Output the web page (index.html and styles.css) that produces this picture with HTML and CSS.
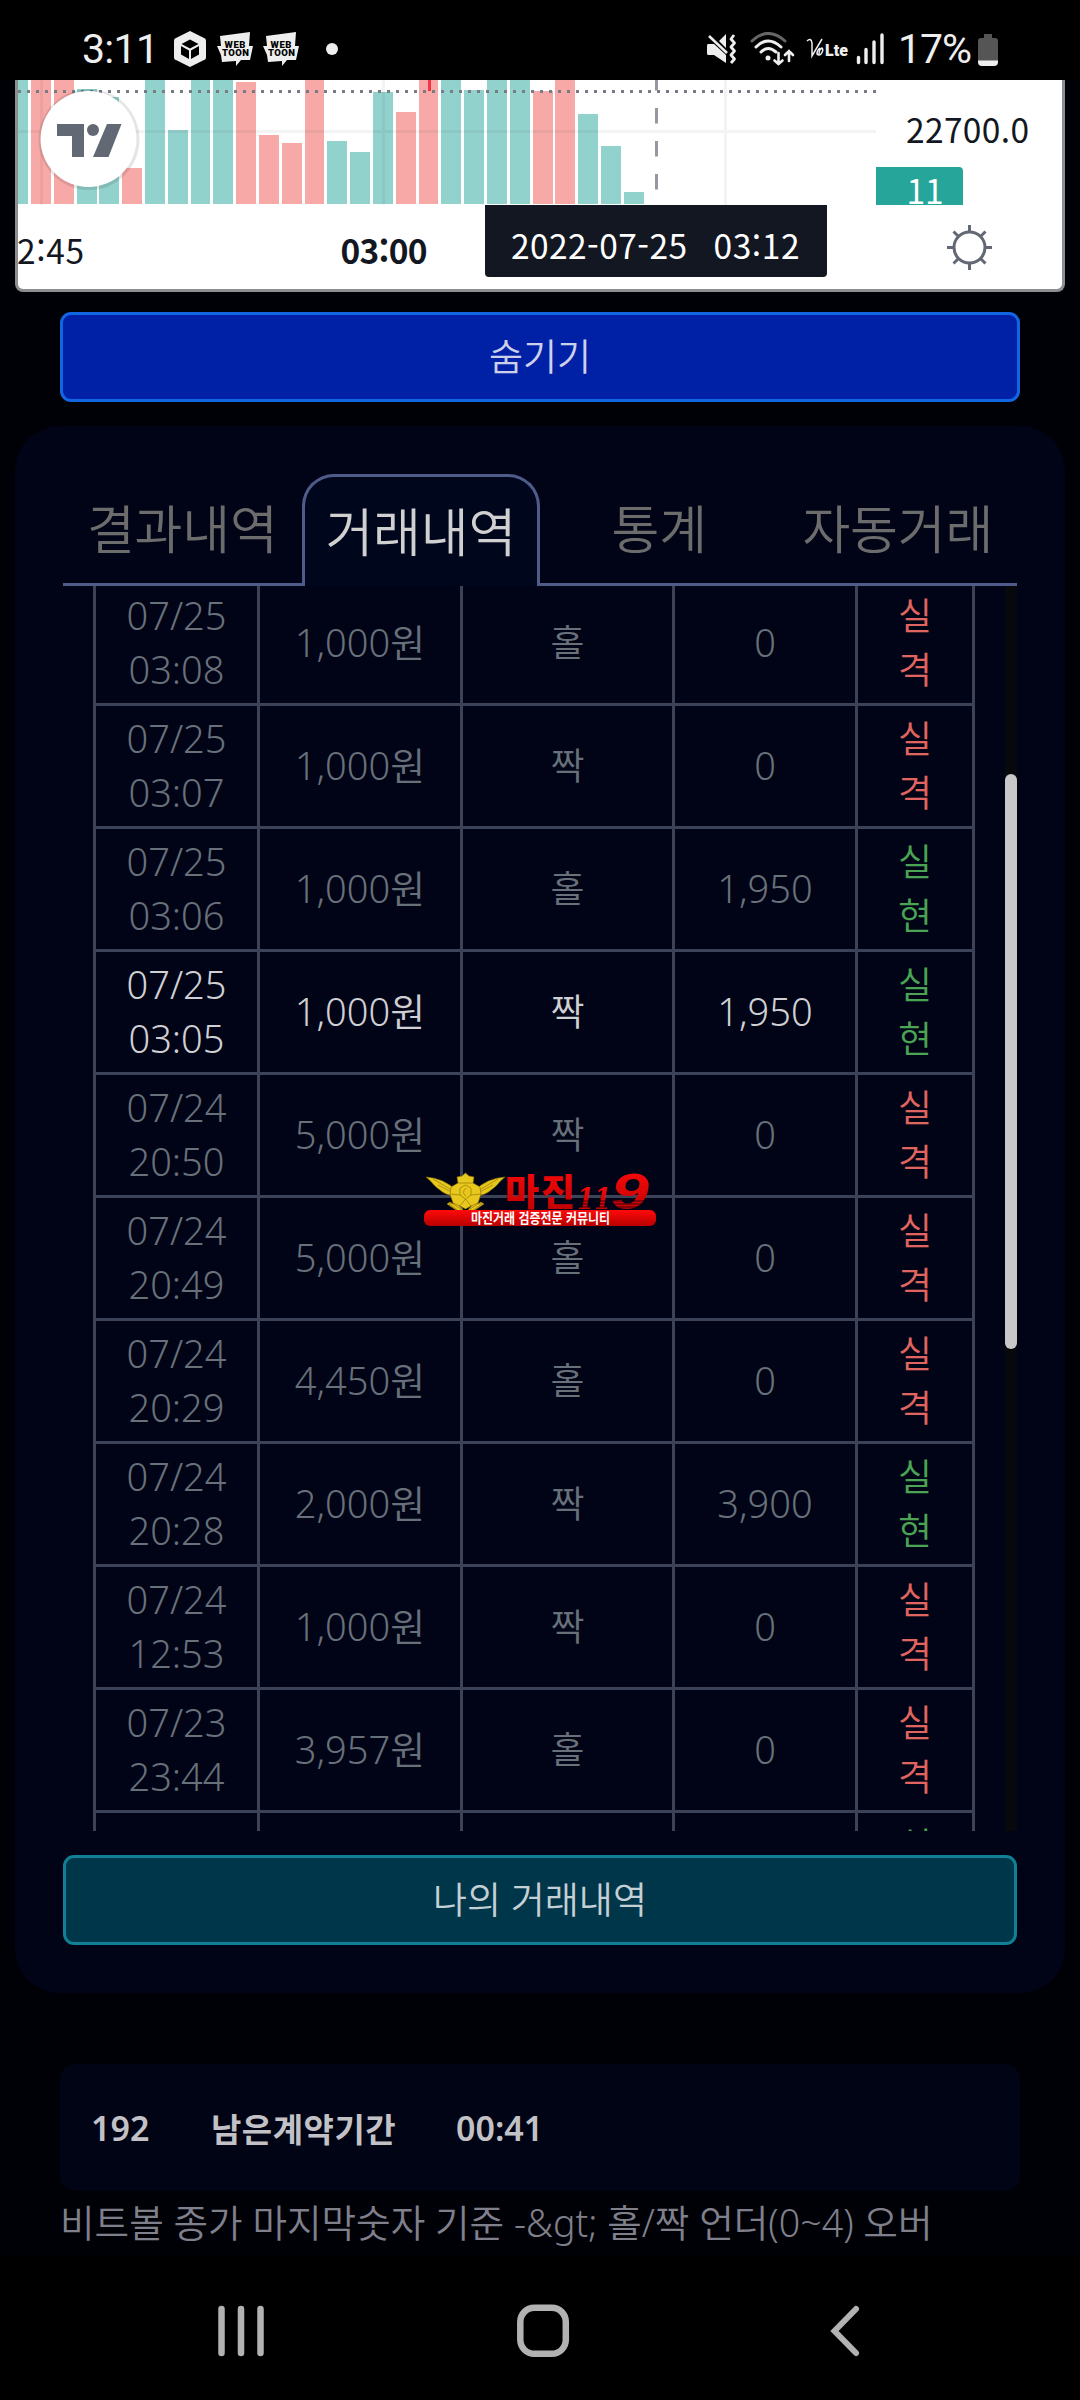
FILE: index.html
```
<!DOCTYPE html>
<html lang="ko">
<head>
<meta charset="UTF-8">
<title>거래내역</title>
<link rel="stylesheet" href="styles.css">
</head>
<body>
<header class="statusbar">
  <div class="status-left">
    <span class="clock">3:11</span>
    <svg class="ico-hex" width="34" height="38" viewBox="0 0 34 38">
      <path d="M17 1 L32 8.500 Q33 9 33 11 V27 Q33 29 32 29.500 L17 37 L2 29.500 Q1 29 1 27 V11 Q1 9 2 8.500 Z" fill="#eee"/>
      <path d="M17 9.500 L25.500 14 L17 18.500 L8.500 14 Z M8 16 L16 20.500 V29 L8 24.500 Z M26 16 L18 20.500 V29 L26 24.500 Z" fill="#000"/>
    </svg>
    <svg class="ico-toon" width="36" height="36" viewBox="0 0 36 36">
      <path d="M3 5 L33 1 L32 15 H36 L33 29 H24 L19 35 V30 L5 31 L4 24 L0 15 H4 Z" fill="#eee"/>
      <text x="18" y="16.500" text-anchor="middle" textLength="21" class="toon-text">WEB</text>
      <text x="18.500" y="25" text-anchor="middle" textLength="27" class="toon-text">TOON</text>
    </svg>
    <svg class="ico-toon" width="36" height="36" viewBox="0 0 36 36">
      <path d="M3 5 L33 1 L32 15 H36 L33 29 H24 L19 35 V30 L5 31 L4 24 L0 15 H4 Z" fill="#eee"/>
      <text x="18" y="16.500" text-anchor="middle" textLength="21" class="toon-text">WEB</text>
      <text x="18.500" y="25" text-anchor="middle" textLength="27" class="toon-text">TOON</text>
    </svg>
    <span class="dot"></span>
  </div>
  <div class="status-right">
    <svg width="32" height="32" viewBox="0 0 32 32">
      <path d="M2 11 H8 L20 22 V30 L8 22 H2 Q1 22 1 20 V13 Q1 11 2 11 Z M20 1 V15 L13 8 Z" fill="#eee"/>
      <path d="M3 3 L21 20" stroke="#eee" stroke-width="2.500" fill="none"/>
      <path d="M28 2 L25 6 L28.500 10 L25 14 L28.500 18 L25 22 L28.500 26 L25 30" stroke="#eee" stroke-width="2.800" fill="none" stroke-linejoin="round"/>
    </svg>
    <svg class="ico-wifi" width="45" height="34" viewBox="0 0 45 34">
      <g fill="none" stroke="#eee" stroke-width="3" stroke-linecap="round">
        <path d="M2 9 Q18 -6 35 9" stroke="#666"/>
        <path d="M6 15 Q18 3 31 15"/>
        <path d="M11 20 Q18 13 26 20"/>
        <path d="M28.500 21 V32 M24.500 28.500 L28.500 32 L32.500 28.500 M39 29 V19 M35 23 L39 19 L43 23" stroke-width="2.600"/>
      </g>
      <circle cx="18" cy="26" r="2.500" fill="#eee"/>
    </svg>
    <svg class="ico-volte" width="43" height="24" viewBox="0 0 43 24">
      <path d="M1 4 Q5 0 6 6 V19 L16 2 M13 17 Q13 12 16 11 Q18 13 15 17 Q13 19 11 17 Q11 13 14 11" fill="none" stroke="#eee" stroke-width="1.500"/>
      <text x="19" y="19" textLength="23" class="lte-text">Lte</text>
    </svg>
    <svg class="ico-signal" width="28" height="32" viewBox="0 0 28 32">
      <path d="M2.500 24.500 V29.500 M10 16.500 V29.500 M18 9 V29.500 M26 2 V29.500" stroke="#eee" stroke-width="3.400" stroke-linecap="round"/>
    </svg>
    <span class="percent">17%</span>
    <svg class="ico-battery" width="20" height="33" viewBox="0 0 20 33">
      <path d="M6 1 H14 V5 H17 Q20 5 20 8 V28 H0 V8 Q0 5 3 5 H6 Z" fill="#555"/>
      <path d="M0 27.500 H20 V29 Q20 33 16 33 H4 Q0 33 0 29 Z" fill="#eee"/>
    </svg>
  </div>
</header>

<main class="page">
  <section class="chart">
    <svg class="chart-svg" width="1044" height="209" viewBox="18 80 1044 209">
      <g fill="#92d2cc">
        <path d="M18 80h10v124h-10z M77 89h20v115h-20z M99 97h20v107h-20z M145 80h20v124h-20z M168 130h20v74h-20z M191 80h19v124h-19z M213 80h20v124h-20z"/>
        <path d="M327 141h20v63h-20z M350 152h20v52h-20z M373 92h20v112h-20z M441 80h20v124h-20z M464 90h20v114h-20z M487 80h20v124h-20z M510 80h20v124h-20z"/>
        <path d="M578 114h20v90h-20z M601 146h20v58h-20z M624 192h20v12h-20z"/>
      </g>
      <g fill="#f7a9a7">
        <path d="M31 80h20v124h-20z M54 80h20v124h-20z M122 168h20v36h-20z M236 82h20v122h-20z M259 135h20v69h-20z M282 143h20v61h-20z M305 80h19v124h-19z"/>
        <path d="M396 112h20v92h-20z M419 80h19v124h-19z M533 91h20v113h-20z M555 80h20v124h-20z"/>
      </g>
      <path d="M429.500 80V91" stroke="#f23645" stroke-width="3"/>
      <path d="M18 131.500H876M41.500 80V205M383.500 80V205M725.500 80V205" stroke="#2a2e39" stroke-opacity=".06" stroke-width="3"/>
      <path d="M18 91.500H876" stroke="#787b86" stroke-width="3" stroke-dasharray="3 6"/>
      <path d="M656.500 75V190" stroke="#9598a1" stroke-width="3" stroke-dasharray="15.500 17.500"/>
      <!-- logo badge -->
      <circle cx="89" cy="139.500" r="50.500" fill="#000" fill-opacity=".1"/>
      <circle cx="88.500" cy="139" r="48" fill="#fff"/>
      <path d="M57 124H84V157H72V136H57Z M107 124H121.500L108.500 157H93Z" fill="#636875"/>
      <circle cx="93" cy="130" r="6" fill="#636875"/>
      <!-- price and time axis -->
      <text x="906" y="143" textLength="123" class="axis">22700.0</text>
      <path d="M876 167H959Q963 167 963 171V205H876Z" fill="#26a69a"/>
      <text x="906.500" y="204" class="axis axis-white">11</text>
      <text x="17" y="264" textLength="67" class="axis">2:45</text>
      <text x="340.500" y="264" textLength="87" class="axis axis-bold">03:00</text>
      <path d="M485 205H827V273Q827 277 823 277H489Q485 277 485 273Z" fill="#131722"/>
      <text x="511" y="259" textLength="176" class="axis axis-white">2022-07-25</text>
      <text x="713.500" y="259" textLength="86" class="axis axis-white">03:12</text>
      <g stroke="#636875" stroke-width="3" fill="none">
        <circle cx="969.500" cy="247.500" r="15.500"/>
        <path d="M969.500 225V232M969.500 263V270M947 247.500H954M985 247.500H992M953.500 231.500L958.500 236.500M980.500 258.500L985.500 263.500M985.500 231.500L980.500 236.500M953.500 263.500L958.500 258.500"/>
      </g>
    </svg>
  </section>

  <button class="btn btn-hide">숨기기</button>

  <section class="panel">
    <nav class="tabs">
      <a class="tab">결과내역</a>
      <a class="tab active">거래내역</a>
      <a class="tab">통계</a>
      <a class="tab">자동거래</a>
    </nav>
    <div class="scroll">
      <table class="history">
        <colgroup><col class="c-date"><col class="c-money"><col class="c-type"><col class="c-profit"><col class="c-result"></colgroup>
        <tr><td class="num">07/25<br>03:08</td><td class="num">1,000원</td><td>홀</td><td class="num">0</td><td class="lose">실<br>격</td></tr>
        <tr><td class="num">07/25<br>03:07</td><td class="num">1,000원</td><td>짝</td><td class="num">0</td><td class="lose">실<br>격</td></tr>
        <tr><td class="num">07/25<br>03:06</td><td class="num">1,000원</td><td>홀</td><td class="num">1,950</td><td class="win">실<br>현</td></tr>
        <tr class="hover"><td class="num">07/25<br>03:05</td><td class="num">1,000원</td><td>짝</td><td class="num">1,950</td><td class="win">실<br>현</td></tr>
        <tr><td class="num">07/24<br>20:50</td><td class="num">5,000원</td><td>짝</td><td class="num">0</td><td class="lose">실<br>격</td></tr>
        <tr><td class="num">07/24<br>20:49</td><td class="num">5,000원</td><td>홀</td><td class="num">0</td><td class="lose">실<br>격</td></tr>
        <tr><td class="num">07/24<br>20:29</td><td class="num">4,450원</td><td>홀</td><td class="num">0</td><td class="lose">실<br>격</td></tr>
        <tr><td class="num">07/24<br>20:28</td><td class="num">2,000원</td><td>짝</td><td class="num">3,900</td><td class="win">실<br>현</td></tr>
        <tr><td class="num">07/24<br>12:53</td><td class="num">1,000원</td><td>짝</td><td class="num">0</td><td class="lose">실<br>격</td></tr>
        <tr><td class="num">07/23<br>23:44</td><td class="num">3,957원</td><td>홀</td><td class="num">0</td><td class="lose">실<br>격</td></tr>
        <tr><td></td><td></td><td></td><td></td><td class="win">실<br>현</td></tr>
      </table>
      <div class="track"><div class="thumb"></div></div>
      <svg class="watermark" width="234" height="56" viewBox="424 1171 234 56">
        <defs>
          <linearGradient id="red" x1="0" y1="0" x2="0" y2="1">
            <stop offset="0" stop-color="#ff0a0a"/>
            <stop offset="1" stop-color="#b80000"/>
          </linearGradient>
        </defs>
        <g fill="#e8c81c" stroke="#8a6d08" stroke-width=".6">
          <path d="M456 1190 Q443 1178 426 1177 Q432 1182 434 1185 Q437 1188 440 1190 Q445 1195 455 1196 Z"/>
          <path d="M475 1190 Q488 1178 505 1177 Q499 1182 497 1185 Q494 1188 491 1190 Q486 1195 476 1196 Z"/>
          <path d="M433 1179 L455 1192 M438 1185 L455 1194 M498 1179 L476 1192 M493 1185 L476 1194" fill="none"/>
          <path d="M449 1204 L457 1203 L463 1210 L459 1211 Z M482 1204 L474 1203 L468 1210 L472 1211 Z M447 1204 L450 1202 L461 1209 L459 1212 Z M484 1204 L481 1202 L470 1209 L472 1212 Z"/>
          <path d="M465.500 1173 L469 1176 L474 1177 L473 1183 L480 1187 L481 1194 L478 1203 L471 1206 L465.500 1209 L460 1206 L453 1203 L450 1194 L451 1187 L458 1183 L457 1177 L462 1176 Z"/>
          <path d="M458 1183 H473 M460 1188 L465.500 1185 L471 1188 V1195 L465.500 1199 L460 1195 Z M450 1194 L460 1195 M471 1195 L481 1194 M460 1206 L465.500 1199 L471 1206 M466 1188 Q461 1193 466 1196" fill="none"/>
        </g>
        <text x="505" y="1206" textLength="70" class="wm-name">마진</text>
        <text x="577" y="1209" textLength="34" lengthAdjust="spacingAndGlyphs" class="wm-num">11</text>
        <text x="611" y="1209" textLength="38" lengthAdjust="spacingAndGlyphs" class="wm-nine">9</text>
        <path d="M576 1201H648M576 1204H648M576 1207H648" stroke="#000416" stroke-width=".7"/>
        <rect x="424" y="1210" width="232" height="16" rx="6" fill="url(#red)"/>
        <text x="471" y="1222.500" textLength="139" lengthAdjust="spacingAndGlyphs" class="wm-sub">마진거래 검증전문 커뮤니티</text>
      </svg>
    </div>
    <button class="btn btn-mine">나의 거래내역</button>
  </section>

  <section class="remain">
    <span class="round">192</span>
    <span class="label">남은계약기간</span>
    <span class="time">00:41</span>
  </section>
  <p class="notice">비트볼 종가 마지막숫자 기준 -&amp;gt; 홀/짝 언더(0~4) 오버</p>
</main>

<footer class="navbar">
  <svg width="1080" height="145" viewBox="0 2255 1080 145" fill="none" stroke="#b2b2b2">
    <path d="M221.500 2309V2353M241 2309V2353M260.500 2309V2353" stroke-width="6.500" stroke-linecap="round"/>
    <rect x="520.300" y="2307.800" width="45.500" height="46" rx="14" stroke-width="6.500"/>
    <path d="M856 2309L834.500 2331L856 2353" stroke-width="6" stroke-linecap="round"/>
  </svg>
</footer>
</body>
</html>
```
FILE: styles.css
```
* {
    box-sizing: border-box;
}
html, body {
    margin: 0;
    height: 2400px;
    overflow: hidden;
}
body {
    display: flex;
    flex-direction: column;
    background: #000107;
    color: #ccc;
    font-family: "Noto Sans", "Noto Sans CJK KR", sans-serif;
    font-weight: 350;
}
svg {
    display: block;
    flex: none;
}

/* status bar */
.statusbar {
    flex: none;
    display: flex;
    justify-content: space-between;
    height: 80px;
    padding: 17px 82px 0 82px;
    background: #000;
    color: #eee;
    font-family: Roboto, sans-serif;
    font-size: 41px;
    font-weight: 400;
}
.status-left, .status-right {
    display: flex;
    align-items: center;
    height: 64px;
}
.clock {
    width: 91px;
    letter-spacing: -0.7px;
}
.ico-toon {
    margin-left: 10px;
}
.toon-text {
    fill: #000;
    font: 900 9.5px Roboto, sans-serif;
}
.dot {
    width: 12px;
    height: 12px;
    margin-left: 27px;
    border-radius: 50%;
    background: #eee;
}
.lte-text {
    fill: #eee;
    font: 900 16px Roboto, sans-serif;
}
.ico-wifi { margin-left: 12px; }
.ico-volte { margin-left: 11px; }
.ico-signal { margin-left: 7px; }
.percent {
    width: 77px;
    margin-left: 14px;
    letter-spacing: -1px;
}
.ico-battery { margin-left: 3px; }

.page {
    flex: none;
    height: 2175px;
    padding: 0 15px;
    overflow: hidden;
}

/* chart */
.chart {
    height: 212px;
    border: 3px solid #8c8e90;
    border-top: none;
    border-radius: 0 0 8px 8px;
    background: #fff;
}
.axis {
    fill: #131722;
    font: 400 33.5px "Noto Sans CJK KR", sans-serif;
}
.axis-white { fill: #fff; }
.axis-bold { font-weight: 700; }

/* buttons */
.btn {
    display: block;
    height: 90px;
    padding: 0 0 5px;
    border: 3px solid #1266e2;
    border-radius: 11px;
    background: #0021a5;
    color: #ccd0ea;
    font: inherit;
    font-size: 37px;
}
.btn-hide {
    width: 960px;
    margin: 20px 45px 24px;
}
.btn-mine {
    width: 954px;
    margin: 24px 48px 0;
    border-color: #0f8096;
    background: #00364a;
    color: #c4d0d4;
}

/* panel */
.panel {
    height: 1567px;
    padding-top: 48px;
    border-radius: 45px;
    background: #000416;
}
.tabs {
    display: flex;
    width: 954px;
    height: 112px;
    margin: 0 48px;
}
.tab {
    flex: none;
    width: 238.5px;
    border-bottom: 3px solid #4f5c8a;
    color: #6c6c6c;
    font-size: 52px;
    line-height: 110px;
    letter-spacing: -0.2px;
    text-align: center;
    white-space: nowrap;
}
.tab.active {
    border: 3px solid #4f5c8a;
    border-bottom: none;
    border-radius: 32px 32px 0 0;
    background: #00061c;
    color: #d0d0d0;
}

/* history table */
.scroll {
    position: relative;
    display: flex;
    justify-content: space-between;
    width: 954px;
    height: 1245px;
    margin: 0 48px;
    overflow: hidden;
}
.history {
    width: 882px;
    height: 1353px;
    margin: -3px 0 0 30px;
    table-layout: fixed;
    border-spacing: 0;
    color: #68707a;
    font-size: 37px;
    line-height: 54px;
    text-align: center;
}
.c-date { width: 167px; }
.c-money { width: 203px; }
.c-type { width: 212px; }
.c-profit { width: 183px; }
.c-result { width: 117px; }
.history tr {
    height: 123px;
}
.history td {
    padding: 0;
    border-right: 3px solid #3c4258;
    border-bottom: 3px solid #3c4258;
}
.history td:first-child {
    border-left: 3px solid #3c4258;
}
.history .num {
    padding-bottom: 3px;
    font-size: 38px;
}
.history .hover {
    color: #d0d0d4;
}
.history .lose { color: #e0645f; }
.history .win { color: #4ba354; }
.track {
    width: 12px;
    height: 1245px;
    padding-top: 188px;
    background: #07080c;
}
.thumb {
    height: 575px;
    border-radius: 6px;
    background: #c8c8c8;
}
.watermark {
    position: absolute;
    left: 361px;
    top: 585px;
}
.wm-name {
    fill: url(#red);
    font: 900 37px "Noto Sans CJK KR", sans-serif;
}
.wm-num {
    fill: url(#red);
    font: italic 700 30px "DejaVu Serif", serif;
}
.wm-nine {
    fill: url(#red);
    font: italic 700 50px "Liberation Sans", sans-serif;
}
.wm-sub {
    fill: #fff;
    font: 700 13.5px "Noto Sans CJK KR", sans-serif;
}

/* remaining time */
.remain {
    display: flex;
    align-items: center;
    height: 127px;
    margin: 71px 45px 0;
    padding-left: 31px;
    border-radius: 15px;
    background: #000415;
    color: #c2c2c6;
    font-size: 34px;
    font-weight: 600;
}
.round { width: 120px; }
.label {
    width: 245px;
    font-size: 33px;
    letter-spacing: 0.5px;
}
.notice {
    margin: 0 45px;
    color: #80808c;
    font-size: 37.6px;
    line-height: 64px;
    white-space: nowrap;
}

.navbar {
    flex: none;
    height: 145px;
    background: #000;
}
```
